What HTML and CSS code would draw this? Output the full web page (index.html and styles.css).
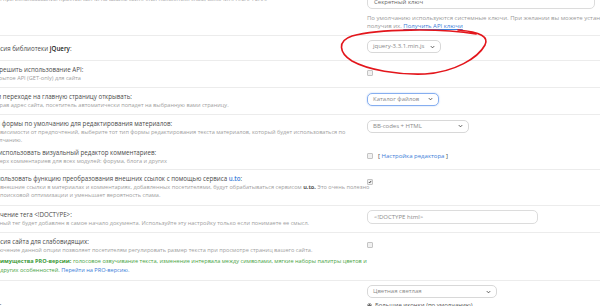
FILE: index.html
```html
<!DOCTYPE html>
<html lang="ru">
<head>
<meta charset="utf-8">
<title>Настройки</title>
<link rel="stylesheet" href="styles.css">
</head>
<body>
<div class="page">
  <div class="row row-first">
    <div class="left"><div class="hint">Если при использовании простой капчи на вашем сайте стал появляться спам, включите reCAPTCHA.</div></div>
    <div class="right">
      <div class="field field-key">Секретный ключ</div>
      <div class="note">По умолчанию используются системные ключи. При желании вы можете установить собственные ключи,<br>получив их. <a class="link link-u">Получить API ключи</a></div>
    </div>
  </div>

  <div class="row row-jq">
    <div class="left"><div class="label">Версия библиотеки <b>jQuery</b>:</div></div>
    <div class="right">
      <div class="select w-jq">jquery-3.3.1.min.js<svg class="chev" viewBox="0 0 6 4"><path d="M1 1 L3 3 L5 1"/></svg></div>
    </div>
  </div>

  <div class="row">
    <div class="left">
      <div class="label">Разрешить использование API:</div>
      <div class="hint">Открытое API (GET-only) для сайта</div>
    </div>
    <div class="right ctl-check"><span class="check"></span></div>
  </div>

  <div class="row">
    <div class="left">
      <div class="label">При переходе на главную страницу открывать:</div>
      <div class="hint">Набрав адрес сайта, посетитель автоматически попадет на выбранную вами страницу.</div>
    </div>
    <div class="right ctl-select">
      <div class="select select-focus w-cat">Каталог файлов<svg class="chev" viewBox="0 0 6 4"><path d="M1 1 L3 3 L5 1"/></svg></div>
    </div>
  </div>

  <div class="row row-form">
    <div class="left">
      <div class="label">Тип формы по умолчанию для редактирования материалов:</div>
      <div class="hint">В зависимости от предпочтений, выберите тот тип формы редактирования текста материалов, который будет использоваться по<br>умолчанию.</div>
    </div>
    <div class="right ctl-select">
      <div class="select w-bb">BB-codes + HTML<svg class="chev" viewBox="0 0 6 4"><path d="M1 1 L3 3 L5 1"/></svg></div>
    </div>
  </div>

  <div class="row row-editor">
    <div class="left">
      <div class="label">Не использовать визуальный редактор комментариев:</div>
      <div class="hint">Поверх комментариев для всех модулей: форума, блога и других</div>
    </div>
    <div class="right ctl-check"><span class="check"></span><span class="brk">[ <a class="link">Настройка редактора</a> ]</span></div>
  </div>

  <div class="row row-uto">
    <div class="left">
      <div class="label">Использовать функцию преобразования внешних ссылок с помощью сервиса <a class="link link-b">u.to</a>:</div>
      <div class="hint">Все внешние ссылки в материалах и комментариях, добавленных посетителями, будут обрабатываться сервисом <b class="dark">u.to.</b> Это очень полезно<br>для поисковой оптимизации и уменьшает вероятность спама.</div>
    </div>
    <div class="right ctl-check"><span class="check checked"><svg viewBox="0 0 6 6"><path d="M1.2 3.1 L2.5 4.4 L4.8 1.4"/></svg></span></div>
  </div>

  <div class="row">
    <div class="left">
      <div class="label">Значение тега &lt;!DOCTYPE&gt;:</div>
      <div class="hint">Данный тег будет добавлен в самое начало документа. Используйте эту настройку только если понимаете ее смысл.</div>
    </div>
    <div class="right ctl-select">
      <div class="field field-doc">&lt;!DOCTYPE html&gt;</div>
    </div>
  </div>

  <div class="row">
    <div class="left">
      <div class="label">Версия сайта для слабовидящих:</div>
      <div class="hint">Включение данной опции позволяет посетителям регулировать размер текста при просмотре страниц вашего сайта.</div>
      <div class="pro"><b>Преимущества PRO-версии:</b> голосовое озвучивание текста, изменение интервала между символами, мягкие наборы палитры цветов и<br>ряд других особенностей. <a class="link">Перейти на PRO-версию.</a></div>
    </div>
    <div class="right ctl-check"><span class="check"></span></div>
  </div>

  <div class="row row-last">
    <div class="left"><div class="label label-low">Выберите вид иконок редактирования материалов:</div></div>
    <div class="right ctl-select">
      <div class="select w-color">Цветная светлая<svg class="chev" viewBox="0 0 6 4"><path d="M1 1 L3 3 L5 1"/></svg></div>
      <div class="radio-line"><span class="radio"></span>Большие иконки (по умолчанию)</div>
    </div>
  </div>
</div>

<svg class="scribble" viewBox="0 0 600 306" width="600" height="306">
  <path d="M476 34 C 440 28, 378 29, 352 36 C 337 41, 339 53, 352 61 C 368 70, 398 75, 425 74 C 455 72, 478 58, 485 45 C 489 37, 481 32, 458 30"/>
</svg>
</body>
</html>
```

FILE: styles.css
```css
html, body {
  margin: 0;
  padding: 0;
  background: #ffffff;
}

body {
  width: 600px;
  height: 306px;
  overflow: hidden;
  position: relative;
  font-family: "Open Sans", "Noto Sans", sans-serif;
  font-size: 6px;
  line-height: 8px;
}

.page {
  width: 640px;
  margin: -9px 0 0 -11px;
}

.row {
  display: grid;
  grid-template-columns: 376px 1fr;
  column-gap: 2px;
  border-top: 1px solid #ececec;
  padding: 4px 0 5px;
}

.row-first {
  border-top: none;
}

.label {
  font-size: 6.2px;
  line-height: 9px;
  color: #4a4a4a;
  white-space: nowrap;
}

.label b {
  color: #222;
  font-weight: 600;
}

.hint {
  font-size: 5.6px;
  line-height: 8px;
  color: #a0a0a0;
  white-space: nowrap;
}

.hint .dark {
  color: #555;
  font-weight: 700;
}

.pro {
  margin-top: 3.5px;
  font-size: 5.6px;
  line-height: 9px;
  color: #4aa445;
  white-space: nowrap;
}

.pro b {
  font-weight: 700;
  color: #3d9a38;
}

.link {
  color: #3b7dd8;
  text-decoration: none;
}

.link-u {
  text-decoration: underline;
}

.link-b {
  font-weight: 600;
}

.note {
  margin-top: 5px;
  font-size: 6px;
  line-height: 8px;
  color: #9a9a9a;
  white-space: nowrap;
}

.field {
  box-sizing: border-box;
  height: 14px;
  border: 1px solid #dcdcdc;
  border-radius: 5px;
  padding: 0 6px;
  font-size: 6px;
  line-height: 12px;
  color: #8a8a8a;
}

.field-key {
  width: 228px;
  color: #666;
}

.field-doc {
  width: 171px;
}

.select {
  box-sizing: border-box;
  height: 13px;
  border: 1px solid #d8d8d8;
  border-radius: 5px;
  padding: 0 5px;
  font-size: 6px;
  line-height: 11px;
  color: #8a8a8a;
  display: flex;
  align-items: center;
  justify-content: space-between;
}

.select-focus {
  border-color: #86aef0;
  box-shadow: 0 0 1.5px rgba(80, 140, 230, 0.55);
}

.chev {
  width: 5px;
  height: 4px;
  fill: none;
  stroke: #555;
  stroke-width: 1.2;
}

.w-jq { width: 74px; }
.w-cat { width: 72px; }
.w-bb { width: 102px; }
.w-color { width: 130px; }

.row-jq {
  padding-bottom: 7px;
}

.row-jq .label {
  padding-top: 3.5px;
}

.ctl-select {
  padding-top: 0.5px;
}

.ctl-check {
  padding-top: 5px;
  display: flex;
  align-items: flex-start;
  gap: 5px;
}

.check {
  box-sizing: border-box;
  width: 6px;
  height: 6px;
  border: 1px solid #c4c4c4;
  border-radius: 1px;
  background: #f1f1f1;
  display: block;
}

.check svg {
  display: block;
  width: 4px;
  height: 4px;
  fill: none;
  stroke: #333;
  stroke-width: 1.3;
}

.brk {
  font-size: 6px;
  line-height: 6px;
  color: #444;
}

.row-form {
  padding-bottom: 0;
}

.row-editor {
  border-top: none;
  padding-top: 3.5px;
  padding-bottom: 4px;
}

.row-editor .ctl-check {
  padding-top: 5.5px;
}

.row-uto {
  padding-bottom: 6px;
}

.row-last .ctl-select {
  padding-top: 0;
}

.label-low {
  padding-top: 18px;
}

.radio-line {
  margin-top: 3px;
  font-size: 6px;
  line-height: 8px;
  color: #555;
  display: flex;
  align-items: center;
  gap: 3px;
}

.radio {
  box-sizing: border-box;
  width: 5px;
  height: 5px;
  border-radius: 50%;
  border: 1px solid #999;
  background: radial-gradient(circle, #666 0 1.2px, #fff 1.3px);
}

.scribble {
  position: absolute;
  left: 0;
  top: 0;
  pointer-events: none;
}

.scribble path {
  fill: none;
  stroke: #e3161c;
  stroke-width: 1.6;
  stroke-linecap: round;
}
```
